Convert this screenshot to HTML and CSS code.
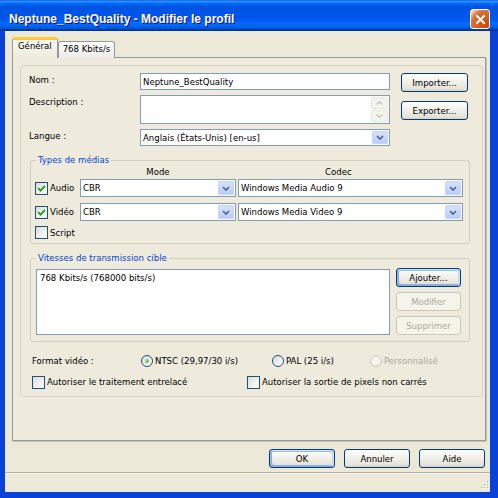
FILE: index.html
```html
<!DOCTYPE html>
<html lang="fr">
<head>
  <meta charset="UTF-8">
  <meta name="viewport" content="width=device-width, initial-scale=1.0">
  <title>Neptune_BestQuality - Modifier le profil</title>
  <link rel="stylesheet" href="styles.css">
</head>
<body>

  <!-- Dialog window -->
  <div class="window">
    <div class="titlebar">
      <span class="title">Neptune_BestQuality - Modifier le profil</span>
      <button class="close" aria-label="Fermer">
        <svg width="11" height="11" viewBox="0 0 11 11"><path d="M2 2 L9 9 M9 2 L2 9" stroke="#fff" stroke-width="2" stroke-linecap="square"/></svg>
      </button>
    </div>

    <div class="client">
      <!-- Tabs -->
      <div class="tabs">
        <div class="tab selected">Général</div>
        <div class="tab">768 Kbits/s</div>
      </div>

      <div class="tab-panel">
        <div class="page">

          <div class="profile-grid">
            <span class="lbl">Nom :</span>
            <div class="field">Neptune_BestQuality</div>
            <div class="side-buttons">
              <button class="btn">Importer...</button>
              <button class="btn">Exporter...</button>
            </div>

            <span class="lbl">Description :</span>
            <div class="field textarea">
              <div class="vscroll">
                <span class="sarrow"><svg width="7" height="4" viewBox="0 0 7 4"><path d="M0.5 3.5 L3.5 0.8 L6.5 3.5" fill="none" stroke="#c6c5ba" stroke-width="1.4"/></svg></span>
                <span class="sarrow"><svg width="7" height="4" viewBox="0 0 7 4"><path d="M0.5 0.5 L3.5 3.2 L6.5 0.5" fill="none" stroke="#c6c5ba" stroke-width="1.4"/></svg></span>
              </div>
            </div>

            <span class="lbl">Langue :</span>
            <div class="field select">
              <span class="value">Anglais (États-Unis) [en-us]</span>
              <span class="drop"><svg width="8" height="5" viewBox="0 0 8 5"><path d="M1 1 L4 4 L7 1" fill="none" stroke="#4d6185" stroke-width="1.6"/></svg></span>
            </div>
          </div>

          <!-- Media types -->
          <fieldset class="group media">
            <legend>Types de médias</legend>
            <div class="media-head">
              <span></span>
              <span class="head-mode">Mode</span>
              <span class="head-codec">Codec</span>
            </div>
            <div class="media-grid">
              <label class="check"><span class="box"><svg width="11" height="11" viewBox="0 0 11 11"><path d="M2.2 5.2 L4.5 7.6 L9 3" fill="none" stroke="#21a121" stroke-width="1.8"/></svg></span>Audio</label>
              <div class="field select tall">
                <span class="value">CBR</span>
                <span class="drop"><svg width="8" height="5" viewBox="0 0 8 5"><path d="M1 1 L4 4 L7 1" fill="none" stroke="#4d6185" stroke-width="1.6"/></svg></span>
              </div>
              <div class="field select tall">
                <span class="value">Windows Media Audio 9</span>
                <span class="drop"><svg width="8" height="5" viewBox="0 0 8 5"><path d="M1 1 L4 4 L7 1" fill="none" stroke="#4d6185" stroke-width="1.6"/></svg></span>
              </div>

              <label class="check"><span class="box"><svg width="11" height="11" viewBox="0 0 11 11"><path d="M2.2 5.2 L4.5 7.6 L9 3" fill="none" stroke="#21a121" stroke-width="1.8"/></svg></span>Vidéo</label>
              <div class="field select tall">
                <span class="value">CBR</span>
                <span class="drop"><svg width="8" height="5" viewBox="0 0 8 5"><path d="M1 1 L4 4 L7 1" fill="none" stroke="#4d6185" stroke-width="1.6"/></svg></span>
              </div>
              <div class="field select tall">
                <span class="value">Windows Media Video 9</span>
                <span class="drop"><svg width="8" height="5" viewBox="0 0 8 5"><path d="M1 1 L4 4 L7 1" fill="none" stroke="#4d6185" stroke-width="1.6"/></svg></span>
              </div>

              <label class="check script"><span class="box"></span>Script</label>
            </div>
          </fieldset>

          <!-- Target bit rates -->
          <fieldset class="group rates">
            <legend>Vitesses de transmission cible</legend>
            <div class="rates-row">
              <div class="listbox">768 Kbits/s (768000 bits/s)</div>
              <div class="rate-buttons">
                <button class="btn default">Ajouter...</button>
                <button class="btn" disabled>Modifier</button>
                <button class="btn" disabled>Supprimer</button>
              </div>
            </div>
          </fieldset>

          <div class="format-row">
            <span>Format vidéo :</span>
            <label class="radio"><span class="dot checked"></span>NTSC (29,97/30 i/s)</label>
            <label class="radio"><span class="dot"></span>PAL (25 i/s)</label>
            <label class="radio disabled"><span class="dot"></span>Personnalisé</label>
          </div>

          <div class="options-row">
            <label class="check"><span class="box"></span>Autoriser le traitement entrelacé</label>
            <label class="check"><span class="box"></span>Autoriser la sortie de pixels non carrés</label>
          </div>

        </div>
      </div>

      <!-- Dialog buttons -->
      <div class="dialog-buttons">
        <button class="btn default">OK</button>
        <button class="btn">Annuler</button>
        <button class="btn">Aide</button>
      </div>

      <div class="statusbar">
        <svg class="grip" width="10" height="10" viewBox="0 0 10 10">
          <g fill="#fff"><rect x="9" y="1" width="1" height="1"/><rect x="6" y="4" width="1" height="1"/><rect x="9" y="4" width="1" height="1"/><rect x="3" y="7" width="1" height="1"/><rect x="6" y="7" width="1" height="1"/><rect x="9" y="7" width="1" height="1"/></g>
          <g fill="#b8b4a2"><rect x="8" y="0" width="1" height="1"/><rect x="5" y="3" width="1" height="1"/><rect x="8" y="3" width="1" height="1"/><rect x="2" y="6" width="1" height="1"/><rect x="5" y="6" width="1" height="1"/><rect x="8" y="6" width="1" height="1"/></g>
        </svg>
      </div>
    </div>
  </div>

</body>
</html>
```

FILE: styles.css
```css
* {
  box-sizing: border-box;
  margin: 0;
  padding: 0;
}

body {
  width: 498px;
  height: 498px;
  overflow: hidden;
  font-family: "DejaVu Sans Condensed", "Liberation Sans", Arial, sans-serif;
  font-size: 9.5px;
  line-height: 12px;
  color: #000;
  background: #0831d9;
}

button {
  font: inherit;
  color: inherit;
}

/* Window frame */
.window {
  width: 498px;
  height: 498px;
  display: flex;
  flex-direction: column;
}

.titlebar {
  height: 31px;
  flex: none;
  display: flex;
  align-items: center;
  justify-content: space-between;
  padding: 7px 8px 0 9px;
  background: linear-gradient(#0058ee 0%, #3593ff 4%, #288eff 6%, #127dff 8%, #036ffc 10%, #0262ee 14%, #0057e5 20%, #0054e3 24%, #0055eb 56%, #005bf5 66%, #026afe 76%, #0062ef 86%, #0052d6 92%, #0040ab 94%, #003092 100%);
}

.title {
  color: #fff;
  font-family: "Liberation Sans", Arial, sans-serif;
  font-weight: bold;
  font-size: 12px;
  text-shadow: 1px 1px #0f1089;
}

.close {
  width: 20px;
  height: 20px;
  border: 1px solid #fff;
  border-radius: 3px;
  display: flex;
  align-items: center;
  justify-content: center;
  background: radial-gradient(circle at 90% 90%, #cc4600 0%, #dc6527 55%, #cd7546 70%, #ffccb2 90%, #fff 100%);
}

.client {
  flex: 1;
  display: flex;
  flex-direction: column;
  background: #ece9d8;
  border-left: 5px solid #0842d8;
  border-right: 8px solid #0842d8;
  border-bottom: 6px solid #0842d8;
  padding: 6px 4px 0 7px;
}

/* Tabs */
.tabs {
  display: flex;
  align-items: flex-end;
  height: 21px;
  margin-bottom: -1px;
  position: relative;
  z-index: 1;
}

.tab {
  height: 17px;
  padding: 1px 4px 0 4px;
  border: 1px solid #919b9c;
  border-bottom: none;
  border-radius: 3px 3px 0 0;
  background: linear-gradient(#fff, #ecebe6);
}

.tab.selected {
  height: 21px;
  padding: 0 5px;
  border-top: 3px solid #ffc83c;
  box-shadow: inset 0 -1px #eeebdd;
  background: linear-gradient(#f9f8f3, #eeebdd);
}

.tab-panel {
  height: 384px;
  border: 1px solid #919b9c;
  box-shadow: 1px 1px 0 #c9c6b6;
  background: #eeebdd;
  padding: 7px 2px 0 7px;
}

.page {
  border: 1px solid #d5d3c4;
  border-radius: 4px;
  padding: 7px 0 7px 8px;
}

/* Inputs */
.field {
  height: 17px;
  border: 1px solid #7f9db9;
  background: #fff;
  padding-left: 2px;
  display: flex;
  align-items: center;
  white-space: nowrap;
}

.field.tall {
  height: 18px;
}

.select {
  justify-content: space-between;
  padding-right: 1px;
}

.drop {
  width: 16px;
  height: calc(100% - 2px);
  display: flex;
  align-items: center;
  justify-content: center;
  border-radius: 2px;
  background: linear-gradient(#d9e3fd, #b7cbf8);
  box-shadow: inset 0 0 0 1px #c6d5fc;
}

.field.textarea {
  height: 29px;
  justify-content: flex-end;
  padding: 1px;
}

.vscroll {
  width: 17px;
  height: 100%;
  display: flex;
  flex-direction: column;
  gap: 1px;
}

.sarrow {
  flex: 1;
  display: flex;
  align-items: center;
  justify-content: center;
  border: 1px solid #e9e8df;
  border-radius: 2px;
  background: #f4f3ec;
}

.profile-grid {
  display: grid;
  grid-template-columns: 111px 250px 78px;
  grid-template-rows: 17px 29px 17px;
  row-gap: 5px;
}

.lbl {
  padding-top: 1px;
}

.side-buttons {
  grid-column: 3;
  grid-row: 1 / span 2;
  display: flex;
  flex-direction: column;
  gap: 9px;
  padding-left: 11px;
}

/* Buttons */
.btn {
  width: 67px;
  height: 19px;
  border: 1px solid #003c74;
  border-radius: 3px;
  background: linear-gradient(#fff, #f3f2ec 40%, #e6e3d8 86%, #d6d0c5);
  text-align: center;
}

.btn.default {
  box-shadow: inset -1px 1px #cee7ff, inset 1px 2px #98b8ea, inset -2px 2px #bcd4f6, inset 1px -1px #89ade4, inset 2px -2px #89ade4;
}

.btn:disabled {
  border-color: #c9c7ba;
  color: #aca899;
  background: #f5f4ea;
}

/* Group boxes */
.group {
  width: 440px;
  margin-left: 1px;
  border: 1px solid #d0d0bf;
  border-radius: 3px;
  padding: 0 4px;
}

.group legend {
  margin-left: 1px;
  padding: 0 2px;
  color: #0046d5;
}

.media {
  margin-top: 8px;
  padding-bottom: 3px;
}

.media-head,
.media-grid {
  display: grid;
  grid-template-columns: 43px 156px 225px;
  column-gap: 2px;
}

.media-head {
  height: 12px;
  margin-bottom: 1px;
}

.head-mode {
  text-align: center;
}

.head-codec {
  padding-left: 87px;
}

.media-grid {
  grid-template-rows: 18px 18px 13px;
  row-gap: 6px;
}

.media-grid .script {
  margin-top: -2px;
}

.check {
  display: flex;
  align-items: center;
  gap: 2px;
  white-space: nowrap;
}

.box {
  width: 13px;
  height: 13px;
  flex: none;
  border: 1px solid #1c5180;
  background: linear-gradient(135deg, #dcdcd7, #fff);
  display: flex;
  align-items: center;
  justify-content: center;
}

.rates {
  margin-top: 8px;
  padding-top: 4px;
  padding-bottom: 6px;
}

.rates-row {
  display: flex;
  align-items: flex-start;
}

.listbox {
  width: 354px;
  height: 66px;
  margin: 1px 0 0 1px;
  border: 1px solid #7f9db9;
  background: #fff;
  padding: 2px 3px;
}

.rate-buttons {
  display: flex;
  flex-direction: column;
  gap: 5px;
  margin-left: 6px;
}

.rate-buttons .btn {
  width: 65px;
}

/* Video format */
.format-row {
  display: grid;
  grid-template-columns: 109px 131px 98px auto;
  align-items: center;
  height: 14px;
  margin-top: 12px;
  padding-left: 3px;
}

.radio {
  display: flex;
  align-items: center;
  gap: 2px;
  white-space: nowrap;
}

.dot {
  width: 12px;
  height: 12px;
  flex: none;
  border: 1px solid #1c5180;
  border-radius: 50%;
  background: linear-gradient(135deg, #dcdcd7, #fff);
  display: flex;
  align-items: center;
  justify-content: center;
}

.dot.checked::after {
  content: "";
  width: 4px;
  height: 4px;
  border-radius: 50%;
  background: radial-gradient(circle at 35% 35%, #a0e59f, #21a121);
}

.radio.disabled {
  color: #aca899;
}

.radio.disabled .dot {
  border-color: #cac8bb;
  background: #f5f4ea;
}

.options-row {
  display: grid;
  grid-template-columns: 215px auto;
  align-items: center;
  height: 14px;
  margin-top: 7px;
  padding-left: 3px;
}

/* Bottom of dialog */
.dialog-buttons {
  display: flex;
  justify-content: flex-end;
  gap: 9px;
  margin: 8px 1px 0 0;
}

.dialog-buttons .btn {
  width: 66px;
}

.statusbar {
  flex: 1;
  margin: 4px -4px 0 -7px;
  border-top: 1px solid #b3b09f;
  box-shadow: inset 0 1px #f7f6f0;
  display: flex;
  justify-content: flex-end;
  align-items: flex-end;
  padding: 0 1px 1px 0;
}
```
